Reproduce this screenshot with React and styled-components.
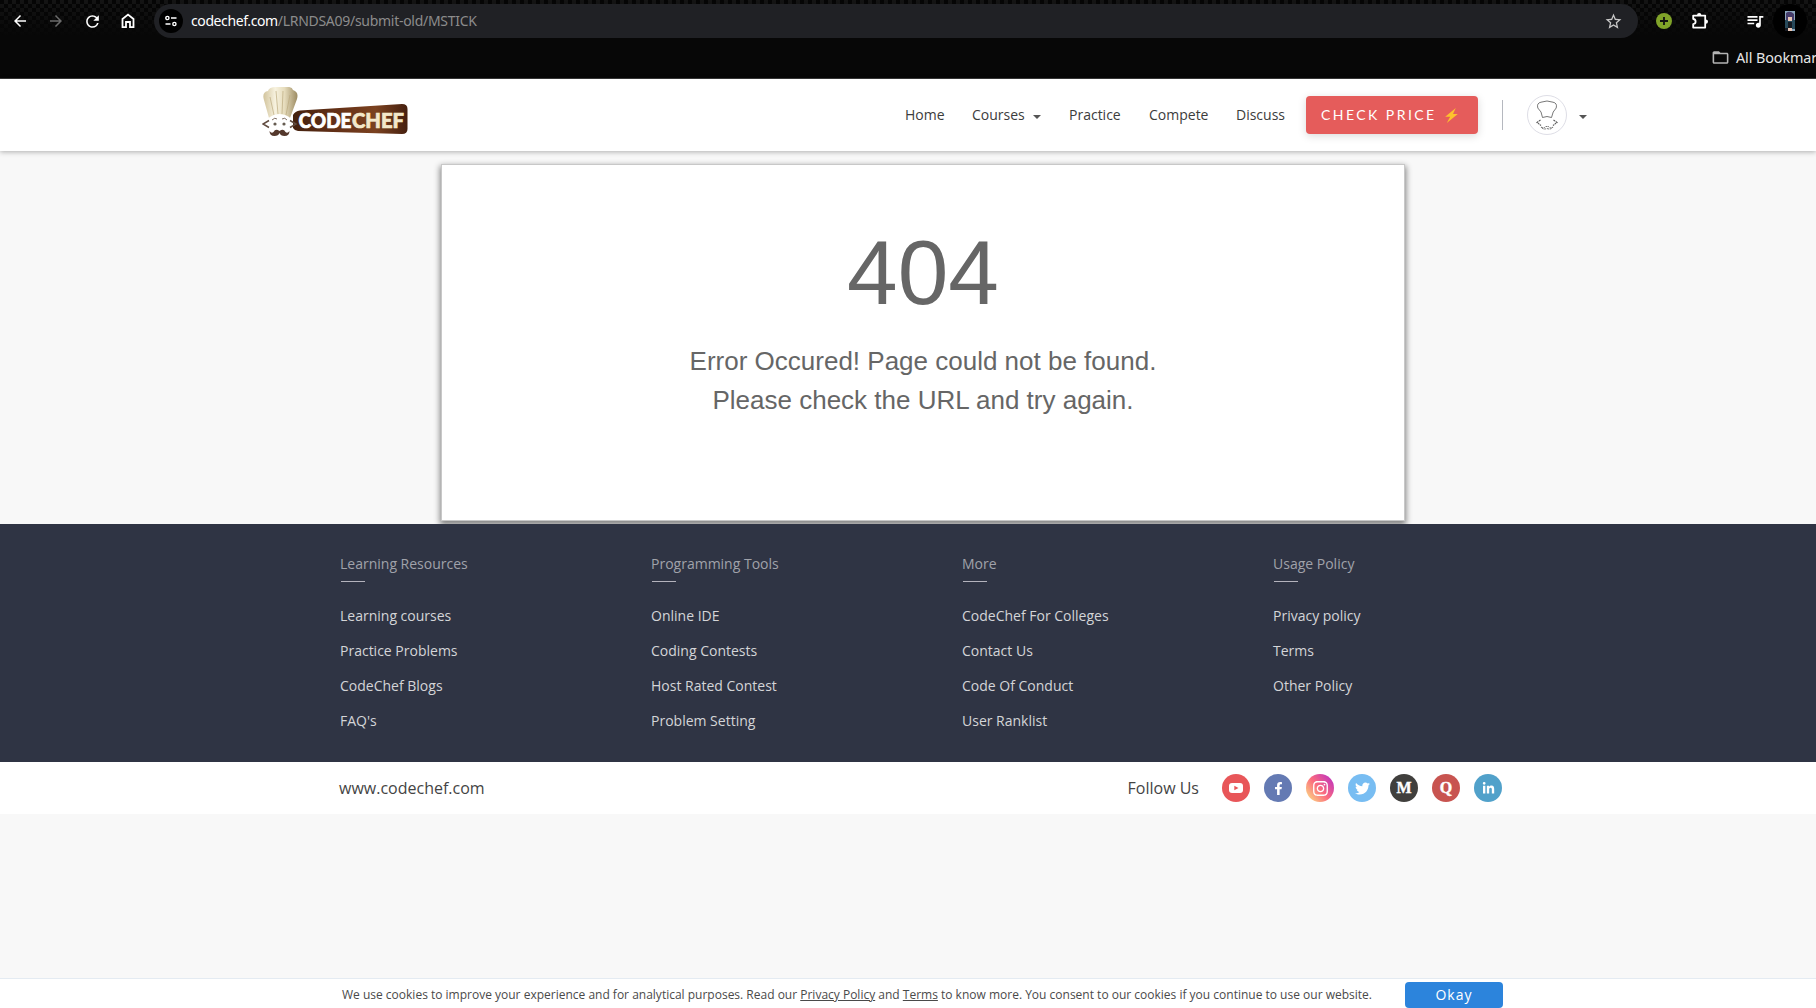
import React from "react";
import styled, { createGlobalStyle } from "styled-components";
import { MdArrowBack, MdArrowForward, MdRefresh, MdStarBorder, MdQueueMusic, MdFolderOpen } from "react-icons/md";
import { FaFacebookF, FaInstagram, FaTwitter, FaLinkedinIn } from "react-icons/fa";

const Global = createGlobalStyle`
  * { box-sizing: border-box; }
  html, body { margin: 0; padding: 0; overflow: hidden; }
  body { background: #f8f8f8; font-family: "Open Sans", "Noto Sans", sans-serif; }
  a { color: inherit; text-decoration: none; }
  svg { display: block; flex: none; }
`;

const Page = styled.div`
  width: 100%;
  height: 1008px;
  display: flex;
  flex-direction: column;
  background: #f8f8f8;
  overflow: hidden;
`;

/* Browser chrome */
const Browser = styled.div`
  flex: none;
  height: 79px;
  border-bottom: 1px solid #3a3a3a;
  color: #fff;
  background:
    linear-gradient(rgba(7, 7, 7, 0), #070707 36px),
    conic-gradient(#141414 25%, #050505 0 50%, #141414 0 75%, #050505 0) 0 0 / 8px 8px;
`;

const Toolbar = styled.div`
  height: 42px;
  display: grid;
  grid-template-columns: 40px 32px 40px 32px 1494px 52px 20px 63px 34px;
  align-items: center;
`;

const ToolIcon = styled.div`
  display: flex;
  justify-content: ${(p) => (p.$end ? "flex-end" : "center")};
  padding-right: ${(p) => (p.$end ? "8px" : "0")};
  color: ${(p) => (p.$dim ? "#6b6b6b" : "#fff")};
`;

const UrlBar = styled.div`
  height: 34px;
  margin-left: 10px;
  display: flex;
  align-items: center;
  padding: 0 15px 0 5px;
  border-radius: 17px;
  background: #202125;
  color: #c7c7c7;
`;

const SiteInfo = styled.div`
  width: 24px;
  height: 24px;
  border-radius: 50%;
  background: #000;
  display: grid;
  place-items: center;
`;

const Url = styled.div`
  flex: 1;
  margin-left: 8px;
  font: 14px/20px "Noto Sans", sans-serif;
  letter-spacing: -0.28px;
  color: #8c8c8c;
`;

const Host = styled.span`
  color: #fff;
  letter-spacing: -0.4px;
`;

const Profile = styled.div`
  width: 34px;
  height: 34px;
  border-radius: 50%;
  background: #000;
  display: grid;
  place-items: center;
`;

const Bookmarks = styled.div`
  height: 31px;
  display: flex;
  align-items: center;
  gap: 6px;
  width: 105px;
  margin-left: auto;
  white-space: nowrap;
  overflow: hidden;
  font: 14.4px/20px "Noto Sans", sans-serif;
  letter-spacing: -0.1px;
  color: #e6e6e6;
  svg { color: #b4b4b4; }
`;

/* Site header */
const Header = styled.header`
  flex: none;
  position: relative;
  height: 72px;
  display: flex;
  align-items: center;
  justify-content: space-between;
  padding: 0 229px 0 262px;
  background: #fff;
  box-shadow: 0 1px 5px rgba(0, 0, 0, 0.3);
`;

const Brand = styled.a`
  display: block;
  padding-bottom: 6px;
`;

const Nav = styled.nav`
  display: grid;
  grid-template-columns: 67px 97px 80px 87px 70px 172px auto;
  align-items: center;
  font-size: 14px;
  line-height: 20px;
  color: #3c3c3c;
`;

const NavLink = styled.a`
  display: flex;
  align-items: center;
  gap: 8px;
`;

const Caret = styled.i`
  margin-top: 3px;
  border: 4px solid transparent;
  border-top-color: #555;
  border-bottom: 0;
`;

const PriceButton = styled.button`
  width: 172px;
  height: 38px;
  display: flex;
  align-items: center;
  gap: 8px;
  padding: 0 15px;
  border: 0;
  border-radius: 4px;
  background: #e55c5b;
  box-shadow: 0 2px 8px rgba(0, 0, 0, 0.15);
  color: #fff;
  white-space: nowrap;
  font: 14px/20px Lato, sans-serif;
  letter-spacing: 2.45px;
`;

const Account = styled.div`
  display: flex;
  align-items: center;
  gap: 12px;
`;

const Divider = styled.i`
  width: 1px;
  height: 30px;
  margin: 0 12px 0 24px;
  background: #b5b8bf;
`;

const Avatar = styled.div`
  width: 40px;
  height: 40px;
  border: 1px solid #dedee6;
  border-radius: 50%;
  display: grid;
  place-items: center;
`;

/* Error card */
const Main = styled.main`
  flex: none;
  height: 373px;
  padding: 13px 0 0 441px;
  overflow: hidden;
`;

const Card = styled.section`
  width: 964px;
  height: 357px;
  border: 1px solid #c8c8c8;
  background: #fff;
  box-shadow: 0 3px 6px 1px rgba(0, 0, 0, 0.48);
  text-align: center;
  color: #666;
  font-family: "Liberation Sans", Arial, sans-serif;
`;

const Code = styled.h1`
  margin: 56px 0 17px;
  font-size: 91px;
  line-height: 104px;
  font-weight: 400;
`;

const Message = styled.p`
  margin: 0;
  font-size: 26px;
  line-height: 39px;
`;

/* Footer */
const Footer = styled.footer`
  flex: none;
  position: relative;
  height: 238px;
  padding: 30px 0 0 340px;
  display: grid;
  grid-template-columns: repeat(4, 311px);
  background: #2f3444;
  font-size: 14px;
`;

const ColumnTitle = styled.h2`
  margin: 0 0 16px;
  font-size: 14px;
  line-height: 20px;
  font-weight: 400;
  color: #a0a2aa;
  &::after {
    content: "";
    display: block;
    width: 24px;
    height: 1px;
    margin: 7px 0 0 1px;
    background: #b4b3bd;
  }
`;

const FooterLink = styled.a`
  display: block;
  line-height: 35px;
  color: #d4d5d8;
`;

const BottomBar = styled.div`
  flex: none;
  height: 52px;
  display: flex;
  align-items: center;
  justify-content: space-between;
  padding: 0 314px 0 339px;
  background: #fff;
  color: #444;
  font-size: 16px;
`;

const Social = styled.div`
  display: flex;
  align-items: center;
  gap: 14px;
`;

const FollowLabel = styled.span`
  margin-right: 9px;
`;

const SocialIcon = styled.a`
  width: 28px;
  height: 28px;
  border-radius: 50%;
  display: grid;
  place-items: center;
  color: #fff;
  background: ${(p) => p.$bg};
  font: bold 16px/28px "Liberation Serif", serif;
  -webkit-text-stroke: 0.4px #fff;
`;

/* Cookie notice */
const CookieBar = styled.div`
  flex: none;
  height: 30px;
  margin-top: auto;
  display: flex;
  align-items: flex-start;
  justify-content: space-between;
  padding: 3px 313px 0 342px;
  border-top: 1px solid #e4ebf2;
  background: #fff;
  font-size: 12px;
  line-height: 25px;
  color: #4a4a4a;
  white-space: nowrap;
  a { text-decoration: underline; }
`;

const OkayButton = styled.button`
  width: 98px;
  height: 26px;
  padding: 0;
  border: 0;
  border-radius: 4px;
  background: #2c84dc;
  color: #fff;
  font: 14px/26px "Open Sans", sans-serif;
  letter-spacing: 1px;
`;

const HomeIcon = () => (
  <svg width="14" height="16" viewBox="0 0 14 16" fill="none" stroke="#fff" strokeWidth="1.8">
    <path d="M1.5 6 7 1.6 12.5 6v8.2H9V9H5v5.2H1.5Z" />
  </svg>
);

const ExtensionIcon = () => (
  <svg width="18" height="18" viewBox="0 0 18 18">
    <path fill="none" stroke="#fff" strokeWidth="1.8" strokeLinejoin="round" d="M2.2 3.6h12v12h-12v-3.4q2.4-.3 2.4-2.6T2.2 7Z" />
    <path fill="#fff" d="M6 3.2a2.2 2.2 0 0 1 4.4 0zM14.8 7.4a2.2 2.2 0 0 1 0 4.4z" />
  </svg>
);

const TuneIcon = () => (
  <svg width="12" height="12" viewBox="0 0 12 12" fill="none" stroke="#fff" strokeWidth="1.4">
    <circle cx="2.4" cy="3" r="1.6" /><path d="M6 3h5.5M.5 9h5" /><circle cx="9.4" cy="9" r="1.6" />
  </svg>
);

const PlusBadge = () => (
  <svg width="16" height="16" viewBox="0 0 16 16">
    <circle cx="8" cy="8" r="8" fill="#80a329" />
    <path d="M8 4v8M4 8h8" stroke="#111" strokeWidth="1.8" />
  </svg>
);

const ProfilePicture = () => (
  <svg width="10" height="20" viewBox="0 0 10 20">
    <path fill="#8da7bd" d="M0 0h10v20H0z" />
    <path fill="#27495a" d="M0 9h10v9H0z" />
    <path fill="#463c6a" d="M1 2q4-3 8 1v6H1z" />
    <path fill="#e8c6b5" d="M3 6h4v4H3zM3 17h4v3H3z" />
    <path fill="#151a22" d="M3 11h4v6H3zM0 17h3v3H0z" />
  </svg>
);

const Bolt = () => (
  <svg width="13" height="15" viewBox="0 0 13 15">
    <path fill="#fdc12d" d="M10.8 0 .2 8.7h5L1.8 15 12.8 6H8Z" />
  </svg>
);

const ChefLogo = () => (
  <svg width="148" height="50" viewBox="0 0 148 50">
    <defs>
      <linearGradient id="plate" x1="0" x2="1">
        <stop offset="0" stopColor="#44210f" /><stop offset=".4" stopColor="#653117" />
        <stop offset=".72" stopColor="#7b4220" /><stop offset="1" stopColor="#46200f" />
      </linearGradient>
      <linearGradient id="hat" x1="0" x2="1">
        <stop offset="0" stopColor="#d2c49d" /><stop offset=".35" stopColor="#f7f2df" />
        <stop offset=".62" stopColor="#e6dcbc" /><stop offset="1" stopColor="#9c8b62" />
      </linearGradient>
    </defs>
    <path fill="url(#plate)" d="M31 28q2-4 7-4.5L140 17q5.500 0 5.500 5v20q0 5-5.500 5L36 44q-3 0-5-3Z" />
    <path fill="url(#hat)" d="M7 31 1.700 12Q0 5 6 4Q7 0 14 0q4-1 8 0 8-1 9 3 6 2 4 9l-7 19q-10-6-21 0Z" />
    <path fill="none" stroke="#bbaa80" strokeWidth=".7" d="M8 10l4 18M14 4l2 23M21 4l-1 23M28 8l-4 20" />
    <ellipse cx="17.5" cy="36" rx="13" ry="9" fill="#fff" />
    <g fill="none" stroke="#614c40" strokeWidth="1.5">
      <path d="m7 33.500-6 3.500 6 3.500M28 33.500l6 3.500-6 3.500" />
      <path strokeWidth=".8" d="M10 33q3-3 5-1M20 32q3-2 5 1" />
    </g>
    <circle cx="13" cy="37" r="1.6" fill="#655b50" /><circle cx="22" cy="37" r="1.6" fill="#655b50" />
    <path fill="#54382c" d="M17.500 44q-4-3-6 1-2 2-4-1 0 5 5 5 4 0 5-3 1 3 5 3 5 0 5-5-2 3-4 1-2-4-6-1Z" />
    <g fontFamily="Lato, sans-serif" fontSize="21" fontWeight="900" strokeWidth=".7">
      <text x="36.500" y="41" textLength="53" lengthAdjust="spacingAndGlyphs" fill="#fff" stroke="#fff">CODE</text>
      <text x="90" y="41" textLength="52" lengthAdjust="spacingAndGlyphs" fill="#f3e8ca" stroke="#f3e8ca">CHEF</text>
    </g>
  </svg>
);

const AvatarChef = () => (
  <svg width="22" height="32" viewBox="0 0 22 32" fill="none" stroke="#555" strokeWidth=".8">
    <path d="M6.500 18.500 5 13 1.800 9Q.5 4 5 3.200 11 .8 17 3.200q4.500.8 3.200 5.800l-3 4-1.700 5.500q-4.500-2-9 0Z" />
    <path d="M4.500 21 1 23.500l4 3M17.500 21l3.500 2.500-4 3" strokeWidth="1.1" strokeDasharray="2 .7" />
    <path d="M5 28q3 2 5-1l1 1 1-1q2 3 5 1-2 3-6 1.500Q7 31 5 28Z" strokeDasharray="2 .7" />
  </svg>
);

const YoutubeIcon = () => (
  <svg width="14" height="10" viewBox="0 0 14 10">
    <rect width="14" height="10" rx="3" fill="#fff" /><path fill="#e85659" d="m5.300 2.800 4.200 2.200-4.200 2.200z" />
  </svg>
);

const columns = [
  ["Learning Resources", ["Learning courses", "Practice Problems", "CodeChef Blogs", "FAQ's"]],
  ["Programming Tools", ["Online IDE", "Coding Contests", "Host Rated Contest", "Problem Setting"]],
  ["More", ["CodeChef For Colleges", "Contact Us", "Code Of Conduct", "User Ranklist"]],
  ["Usage Policy", ["Privacy policy", "Terms", "Other Policy"]],
];

const socials = [
  ["#e85659", <YoutubeIcon />],
  ["#647ab3", <FaFacebookF size={13} />],
  ["linear-gradient(50deg, #fbd583 8%, #fb6c7e 48%, #c93bb4 85%)", <FaInstagram size={17} />],
  ["#78bdf2", <FaTwitter size={15} />],
  ["#403f3d", "M"],
  ["#c85450", "Q"],
  ["#51a1ca", <FaLinkedinIn size={13} />],
];

export default function App() {
  return (
    <Page>
      <Global />
      <Browser>
        <Toolbar>
          <ToolIcon><MdArrowBack size={18} /></ToolIcon>
          <ToolIcon $dim><MdArrowForward size={18} /></ToolIcon>
          <ToolIcon><MdRefresh size={19} /></ToolIcon>
          <ToolIcon><HomeIcon /></ToolIcon>
          <UrlBar>
            <SiteInfo><TuneIcon /></SiteInfo>
            <Url><Host>codechef.com</Host>/LRNDSA09/submit-old/MSTICK</Url>
            <MdStarBorder size={19} />
          </UrlBar>
          <ToolIcon><PlusBadge /></ToolIcon>
          <ToolIcon><ExtensionIcon /></ToolIcon>
          <ToolIcon $end><MdQueueMusic size={20} /></ToolIcon>
          <Profile><ProfilePicture /></Profile>
        </Toolbar>
        <Bookmarks><MdFolderOpen size={19} />All Bookmarks</Bookmarks>
      </Browser>
      <Header>
        <Brand><ChefLogo /></Brand>
        <Nav>
          <NavLink>Home</NavLink>
          <NavLink>Courses <Caret /></NavLink>
          <NavLink>Practice</NavLink>
          <NavLink>Compete</NavLink>
          <NavLink>Discuss</NavLink>
          <PriceButton>CHECK PRICE <Bolt /></PriceButton>
          <Account><Divider /><Avatar><AvatarChef /></Avatar><Caret /></Account>
        </Nav>
      </Header>
      <Main>
        <Card>
          <Code>404</Code>
          <Message>Error Occured! Page could not be found.</Message>
          <Message>Please check the URL and try again.</Message>
        </Card>
      </Main>
      <Footer>
        {columns.map(([title, links]) => (
          <div key={title}>
            <ColumnTitle>{title}</ColumnTitle>
            {links.map((link) => <FooterLink key={link}>{link}</FooterLink>)}
          </div>
        ))}
      </Footer>
      <BottomBar>
        <span>www.codechef.com</span>
        <Social>
          <FollowLabel>Follow Us</FollowLabel>
          {socials.map(([bg, icon]) => <SocialIcon key={bg} $bg={bg}>{icon}</SocialIcon>)}
        </Social>
      </BottomBar>
      <CookieBar>
        <span>We use cookies to improve your experience and for analytical purposes. Read our <a>Privacy Policy</a> and <a>Terms</a> to know more. You consent to our cookies if you continue to use our website.</span>
        <OkayButton>Okay</OkayButton>
      </CookieBar>
    </Page>
  );
}
